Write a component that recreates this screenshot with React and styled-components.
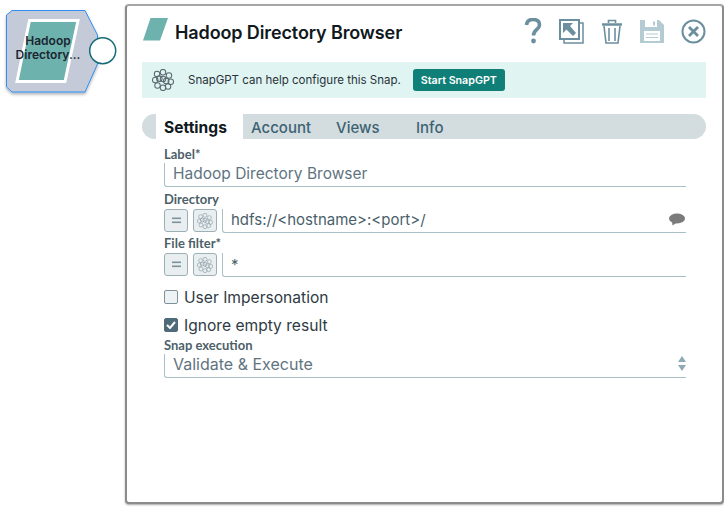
import React from 'react';
import styled, { createGlobalStyle } from 'styled-components';

const GlobalStyle = createGlobalStyle`
  html, body {
    margin: 0;
    padding: 0;
    background: #fff;
    font-family: 'Inter', 'Liberation Sans', sans-serif;
  }
`;

const Page = styled.div`
  width: 724px;
  height: 507px;
  display: flex;
  align-items: flex-start;
  overflow: hidden;
`;

const Node = styled.div`
  position: relative;
  flex: none;
  width: 120px;
  height: 100px;
  margin: 6px 0 0 2px;
`;

const NodeLabel = styled.div`
  position: absolute;
  left: 0;
  top: 28px;
  width: 92px;
  text-align: center;
  font-size: 12px;
  line-height: 14px;
  font-weight: 600;
  color: #1a2530;
`;

const Panel = styled.div`
  flex: none;
  box-sizing: border-box;
  width: 599px;
  height: 500px;
  margin: 4px 0 0 3px;
  padding: 12px 16px 0 15px;
  background: #fff;
  border: 2px solid #8c8c8c;
  border-top-color: #a6a6a6;
  border-radius: 4px;
  box-shadow: 0 1px 2px rgba(0, 0, 0, 0.35);
`;

const Header = styled.div`
  box-sizing: border-box;
  display: flex;
  align-items: center;
  height: 32px;
  padding-bottom: 4px;
`;

const HeaderMark = styled.svg`
  margin: 0 0 6px 1px;
`;

const Title = styled.div`
  margin-left: 7px;
  font-size: 18px;
  font-weight: 600;
  color: #101820;
  letter-spacing: -0.12px;
`;

const Actions = styled.div`
  display: flex;
  align-items: center;
  gap: 17px;
  margin-left: auto;
  padding-bottom: 2px;
`;

const Banner = styled.div`
  display: flex;
  align-items: center;
  height: 36px;
  margin-top: 12px;
  padding-left: 10px;
  background: #e0f4f1;
  font-size: 11.5px;
  color: #28323a;
`;

const BannerText = styled.span`
  margin-left: 14px;
`;

const StartButton = styled.button`
  margin-left: 12px;
  width: 92px;
  height: 22px;
  padding: 0;
  border: none;
  border-radius: 3px;
  background: #0f7f78;
  color: #fff;
  font-family: inherit;
  font-size: 10.7px;
  font-weight: 600;
`;

const Tabs = styled.div`
  display: flex;
  height: 25px;
  margin-top: 16px;
  padding-left: 14px;
  background: #d3dcdf;
  border-radius: 13px;
`;

const Tab = styled.div`
  width: ${(p) => p.$width}px;
  box-sizing: border-box;
  padding-left: ${(p) => p.$pad}px;
  background: ${(p) => (p.$active ? '#fff' : 'transparent')};
  color: ${(p) => (p.$active ? '#101820' : '#3d6373')};
  font-size: ${(p) => (p.$active ? 15.6 : 15)}px;
  font-weight: ${(p) => (p.$active ? 700 : 500)};
  line-height: 27px;
`;

const Form = styled.div`
  display: flex;
  flex-direction: column;
  margin: 0 20px 0 22px;
`;

const FieldLabel = styled.div`
  box-sizing: border-box;
  height: ${(p) => p.$h}px;
  padding-top: ${(p) => p.$top}px;
  font-family: 'Lato', sans-serif;
  font-size: 13px;
  line-height: 14px;
  font-weight: 700;
  color: #4d5f69;
`;

const Row = styled.div`
  display: flex;
  gap: 5px;
  height: 24px;
`;

const Input = styled.div`
  flex: 1 1 auto;
  display: flex;
  align-items: center;
  justify-content: space-between;
  box-sizing: border-box;
  height: 24px;
  padding: 0 0 ${(p) => p.$lift || 0}px 8px;
  border-left: 1px solid #a9c0c8;
  border-bottom: 1px solid #a9c0c8;
  border-bottom-left-radius: 3px;
  font-size: ${(p) => p.$size || 15}px;
  color: ${(p) => p.$color || '#5f7480'};
`;

const ExprButton = styled.div`
  flex: none;
  display: flex;
  align-items: center;
  justify-content: center;
  box-sizing: border-box;
  width: 24px;
  height: 23px;
  background: #e9eef0;
  border: 1px solid #9db0b8;
  border-radius: 3px;
`;

const CheckRow = styled.label`
  display: flex;
  align-items: center;
  gap: 6px;
  height: 16px;
  margin-top: ${(p) => p.$top}px;
  font-size: 15.6px;
  color: #2f3b44;
`;

const Box = styled.span`
  display: flex;
  align-items: center;
  justify-content: center;
  box-sizing: border-box;
  width: 14px;
  height: 14px;
  border-radius: 2px;
  border: 1px solid ${(p) => (p.$on ? '#4f6b79' : '#7f929b')};
  background: ${(p) => (p.$on ? '#4f6b79' : '#edf2f4')};
`;

const CommentMark = styled.svg`
  margin-right: 1px;
`;

const Flower = ({ size, color, width = 1.1 }) => (
  <svg width={size} height={size} viewBox="0 0 24 24" fill="none" stroke={color} strokeWidth={width}>
    {[[12, 3.5], [5.5, 5.5], [18.5, 7], [3.5, 12], [12, 11], [20.5, 14], [6, 18], [12, 20.5], [17.5, 19], [8, 10.5], [15.5, 13]].map(([x, y]) => (
      <circle key={`${x}-${y}`} cx={x} cy={y} r="3" />
    ))}
  </svg>
);

const ExprIcon = () => (
  <svg width="9" height="7" viewBox="0 0 9 7" fill="#7d929c">
    <rect x="0" y="0.5" width="9" height="1.6" />
    <rect x="0" y="4.5" width="9" height="1.6" />
  </svg>
);

const NodeShape = () => (
  <svg width="120" height="100" viewBox="0 0 120 100">
    <defs>
      <filter id="shade" x="-10%" y="-10%" width="125%" height="125%">
        <feDropShadow dx="0" dy="2" stdDeviation="1.6" floodColor="#000" floodOpacity="0.3" />
      </filter>
    </defs>
    <path d="M10 4.5 H83 L95.5 29 V58 L83 86 H10 L4.5 81 V9 Z" fill="#c4cad8" stroke="#2f8ff0" strokeWidth="1" filter="url(#shade)" />
    <path d="M27.5 14.5 H76 L63 75.5 H15 Z" fill="#6eb2ad" stroke="#fff" strokeWidth="3" />
    <circle cx="100.7" cy="44.7" r="13" fill="#fff" stroke="#156a78" strokeWidth="1.5" />
  </svg>
);

const Parallelogram = () => (
  <HeaderMark width="25" height="23" viewBox="0 0 25 23">
    <path d="M7.5 0 H25 L17 22.5 H0 Z" fill="#6eb2ad" />
  </HeaderMark>
);

const HelpIcon = () => (
  <svg width="18" height="26" viewBox="0 0 18 26" fill="none" stroke="#6b8f9e">
    <path d="M2.5 7 C3 2.5 6 1.5 9 1.5 C13 1.5 15.5 3.5 15.5 7 C15.5 11.5 9.5 11.5 9.5 17.5" strokeWidth="3.6" />
    <circle cx="9.5" cy="23" r="2.4" fill="#6b8f9e" stroke="none" />
  </svg>
);

const ExportIcon = () => (
  <svg width="25" height="25" viewBox="0 0 25 25" fill="none" stroke="#6b8f9e" strokeWidth="1.5">
    <path d="M20 4 H24 V24 H5 V20" />
    <rect x="1" y="1" width="19" height="19" fill="#fff" strokeWidth="2" />
    <path d="M4 4 H14 L11 7 L17 14 L14 17 L7.5 10.5 L4 14 Z" fill="#6b8f9e" stroke="none" />
  </svg>
);

const TrashIcon = () => (
  <svg width="22" height="25" viewBox="0 0 22 25" fill="none" stroke="#6b8f9e" strokeWidth="1.6">
    <path d="M1 5.5 H21" strokeWidth="2.5" />
    <path d="M7.5 4 V1.5 H14.5 V4" />
    <path d="M3 7 L5 24 H17 L19 7" />
    <path d="M8 9 V22 M14 9 V22" />
  </svg>
);

const SaveIcon = () => (
  <svg width="24" height="25" viewBox="0 0 24 25">
    <path d="M0 1 H19 L24 6 V24 H0 Z" fill="#b5cbd4" />
    <rect x="5" y="1" width="12" height="7" fill="#fff" />
    <rect x="13" y="2.5" width="2" height="4" fill="#b5cbd4" />
    <rect x="4" y="12" width="16" height="10" fill="#fff" />
    <path d="M6 15 H18 M6 18.5 H18" stroke="#b5cbd4" strokeWidth="1.2" />
  </svg>
);

const CloseIcon = () => (
  <svg width="25" height="25" viewBox="0 0 25 25" fill="none" stroke="#6b8f9e">
    <circle cx="12.5" cy="12.5" r="11" strokeWidth="2" />
    <path d="M8 8 L17 17 M17 8 L8 17" strokeWidth="2.8" />
  </svg>
);

const CommentIcon = () => (
  <CommentMark width="16" height="13" viewBox="0 0 16 13" fill="#7b7b7b">
    <ellipse cx="8" cy="5.5" rx="8" ry="5" />
    <path d="M3 8 L3.5 12.5 L8 9.5 Z" />
  </CommentMark>
);

const SortIcon = () => (
  <svg width="8" height="15" viewBox="0 0 8 15" fill="#8fa9b5">
    <path d="M4 0 L8 6 H0 Z" />
    <path d="M0 9 H8 L4 15 Z" />
  </svg>
);

const App = () => {
  return (
    <Page>
      <GlobalStyle />
      <Node>
        <NodeShape />
        <NodeLabel>
          Hadoop
          <br />
          Directory...
        </NodeLabel>
      </Node>
      <Panel>
        <Header>
          <Parallelogram />
          <Title>Hadoop Directory Browser</Title>
          <Actions>
            <HelpIcon />
            <ExportIcon />
            <TrashIcon />
            <SaveIcon />
            <CloseIcon />
          </Actions>
        </Header>
        <Banner>
          <Flower size={22} color="#5a6870" />
          <BannerText>SnapGPT can help configure this Snap.</BannerText>
          <StartButton>Start SnapGPT</StartButton>
        </Banner>
        <Tabs>
          <Tab $active $width={87} $pad={8}>Settings</Tab>
          <Tab $width={93} $pad={8}>Account</Tab>
          <Tab $width={80} $pad={0}>Views</Tab>
          <Tab $width={60} $pad={0}>Info</Tab>
        </Tabs>
        <Form>
          <FieldLabel $h={24} $top={8}>Label*</FieldLabel>
          <Input $size={15.5} $lift={2}>Hadoop Directory Browser</Input>
          <FieldLabel $h={22} $top={5}>Directory</FieldLabel>
          <Row>
            <ExprButton><ExprIcon /></ExprButton>
            <ExprButton><Flower size={16} color="#8fa0a8" width={1} /></ExprButton>
            <Input $color="#4a5f6b" $lift={3}>
              hdfs://&lt;hostname&gt;:&lt;port&gt;/
              <CommentIcon />
            </Input>
          </Row>
          <FieldLabel $h={20} $top={3}>File filter*</FieldLabel>
          <Row>
            <ExprButton><ExprIcon /></ExprButton>
            <ExprButton><Flower size={16} color="#8fa0a8" width={1} /></ExprButton>
            <Input $color="#4a5f6b">*</Input>
          </Row>
          <CheckRow $top={12}>
            <Box />
            User Impersonation
          </CheckRow>
          <CheckRow $top={12}>
            <Box $on>
              <svg width="10" height="8" viewBox="0 0 10 8" fill="none" stroke="#fff" strokeWidth="2">
                <path d="M1 4 L4 7 L9 1" />
              </svg>
            </Box>
            Ignore empty result
          </CheckRow>
          <FieldLabel $h={21} $top={5}>Snap execution</FieldLabel>
          <Input $size={16} $lift={4}>
            Validate &amp; Execute
            <SortIcon />
          </Input>
        </Form>
      </Panel>
    </Page>
  );
};

export default App;
